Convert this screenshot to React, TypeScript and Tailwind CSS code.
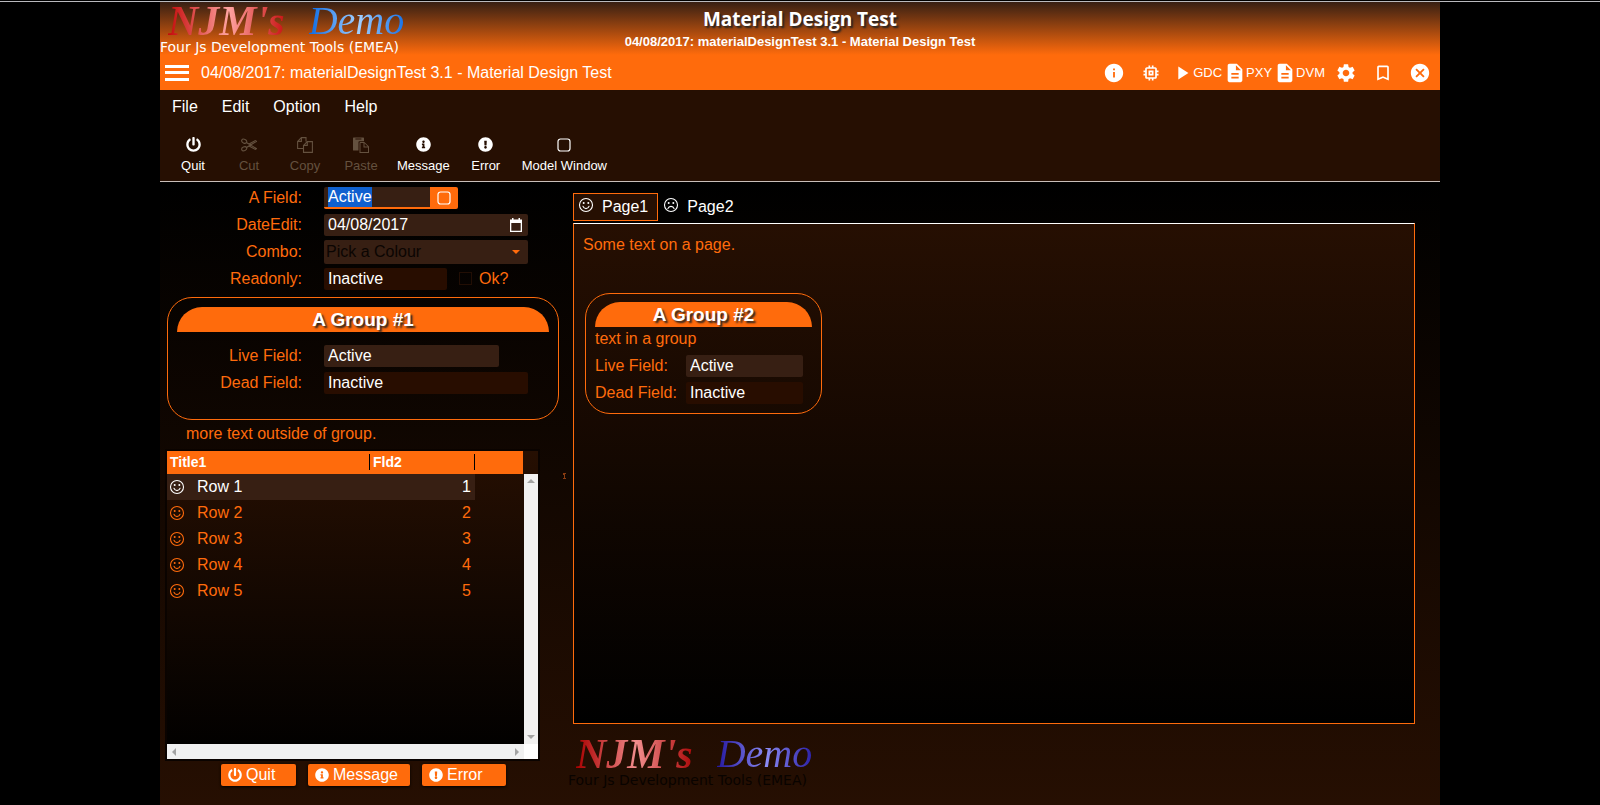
import type { ReactNode } from "react";
import {
  FaPowerOff,
  FaInfoCircle,
  FaExclamationCircle,
} from "react-icons/fa";
import {
  MdInfo,
  MdMemory,
  MdPlayArrow,
  MdDescription,
  MdSettings,
  MdBookmarkBorder,
  MdCancel,
} from "react-icons/md";

function Square({ className }: { className: string }) {
  return (
    <svg viewBox="0 0 16 16" className={className} fill="none" stroke="currentColor" aria-hidden="true">
      <rect x="2" y="2" width="12" height="12" rx="2.5" strokeWidth="1.2" />
    </svg>
  );
}

function Face({ className, sad }: { className: string; sad?: boolean }) {
  return (
    <svg viewBox="0 0 16 16" className={className} fill="none" stroke="currentColor" aria-hidden="true">
      <circle cx="8" cy="8" r="6.5" strokeWidth="1.1" />
      <circle cx="5.7" cy="6" r="1" fill="currentColor" stroke="none" />
      <circle cx="10.3" cy="6" r="1" fill="currentColor" stroke="none" />
      <path d={sad ? "M4.9 11.6c1-3 5.2-3 6.2 0" : "M4.9 9.2c1 3.2 5.2 3.2 6.2 0"} strokeWidth="1.1" strokeLinecap="round" />
    </svg>
  );
}

function Scissors() {
  return (
    <svg viewBox="0 0 16 16" className="size-4" fill="none" stroke="currentColor" strokeWidth="1.1" aria-hidden="true">
      <ellipse cx="3.2" cy="4.2" rx="2.6" ry="1.9" transform="rotate(25 3.2 4.2)" />
      <ellipse cx="3.2" cy="11.8" rx="2.6" ry="1.9" transform="rotate(-25 3.2 11.8)" />
      <path d="M5.4 5.6 8 7.1l6.3-3.5 1.2.7L6 10.2M5.4 10.4 8 8.9l6.3 3.5 1.2-.7L8.6 7.4" />
    </svg>
  );
}

function CopyPages() {
  return (
    <svg viewBox="0 0 16 16" className="size-4" fill="none" stroke="currentColor" strokeWidth="1.1" aria-hidden="true">
      <path d="M6 11.5H.6V4.4L4.4.6H9v4M4.4.6v3.8H.6M6.5 15.4V8.4l3.8-3.8h5.1v10.8zM10.3 4.6v3.8H6.5" />
    </svg>
  );
}

function PastePage() {
  return (
    <svg viewBox="0 0 16 16" className="size-4" aria-hidden="true">
      <path
        fill="currentColor"
        fillRule="evenodd"
        d="M0 1.2Q0 .6.6.6h9.8q.6 0 .6.6v3H6.4q-.9 0-.9.9v8.4H.6q-.6 0-.6-.6zM2.4 1.4v1.2h6V1.4zM7.2 5h4.1L16 9.6V16H6.5V5.6zM7.5 6v9H15v-4.5h-4.5V6zM11.5 6.2v3.3h3.3z"
      />
    </svg>
  );
}

function Logo({ dark }: { dark?: boolean }) {
  return (
    <div className="w-[260px] whitespace-nowrap">
      <div className="flex h-[38px] items-center gap-5 pl-2 font-['Liberation_Serif',serif] leading-[38px] italic">
        <span
          className={
            dark
              ? "bg-linear-to-r/srgb from-[#a80000] via-[#f28d8d] to-[#a80000] bg-clip-text pr-1 text-[42px] font-bold text-transparent"
              : "bg-linear-to-r/srgb from-[#c40a0a] via-[#ffa3a0] to-[#c40a0a] bg-clip-text pr-1 text-[42px] font-bold text-transparent"
          }
        >
          NJM's
        </span>
        <span
          className={
            dark
              ? "bg-linear-to-r/srgb from-[#2418a0] via-[#8b8bf5] to-[#2418a0] bg-clip-text pr-1 text-[40px] text-transparent"
              : "bg-linear-to-r/srgb from-[#0b6be6] via-[#a3d0ff] to-[#0b6be6] bg-clip-text pr-1 text-[40px] text-transparent"
          }
        >
          Demo
        </span>
      </div>
      <div
        className={
          dark
            ? "font-['DejaVu_Sans',sans-serif] text-[14px] leading-[14px] text-[#090300]"
            : "font-['DejaVu_Sans',sans-serif] text-[14px] leading-[14px] text-white"
        }
      >
        Four Js Development Tools (EMEA)
      </div>
    </div>
  );
}

function Tool({ label, disabled, children }: { label: string; disabled?: boolean; children: ReactNode }) {
  return (
    <button
      disabled={disabled}
      className="flex min-w-14 flex-col items-center px-2 text-[13px] leading-4 text-white disabled:text-[#64513f]"
    >
      <span className="flex h-[21px] items-start">{children}</span>
      <span>{label}</span>
    </button>
  );
}

function Row({ id, label, children }: { id: string; label: string; children: ReactNode }) {
  return (
    <div className="flex h-[27px] items-center">
      <label htmlFor={id} className="w-[135px] shrink-0 text-right">
        {label}
      </label>
      <div className="flex flex-1 items-center pl-[22px]">{children}</div>
    </div>
  );
}

function GroupTitle({ children }: { children: ReactNode }) {
  return (
    <h2 className="rounded-t-[25px] bg-[#ff6b0c] text-center text-[19px] leading-[25px] font-bold text-white [text-shadow:2px_2px_2px_#222]">
      {children}
    </h2>
  );
}

const live = "h-[22px] rounded-[2px] bg-[#371f13] px-1 text-white outline-none";
const dead = "h-[22px] rounded-[2px] bg-[#280d00] px-1 text-white outline-none";
const action = "flex h-[22px] items-center gap-1 rounded-[2px] bg-[#ff6b0c] pl-[7px] text-white shadow-[0_1px_3px_#000]";
const rows = [1, 2, 3, 4, 5];

export default function App() {
  return (
    <div className="min-h-screen bg-black pt-px font-['Liberation_Sans',Arial,sans-serif] text-base leading-5 text-[#ff6b0c]">
      <div className="border-t border-[#b9b9bd]">
        <div className="mx-auto flex min-h-[calc(100vh-2px)] w-4/5 flex-col bg-[#260f02]">
          <header className="bg-linear-to-b/srgb from-[#371f13] to-[#ff6b0c] to-[53px] text-white">
            <div className="grid h-[53px] grid-cols-[1fr_auto_1fr]">
              <Logo />
              <div className="pt-[5px] text-center">
                <h1 className="font-['Open_Sans',sans-serif] text-[19px] leading-6 font-bold [text-shadow:2px_2px_2px_#222]">
                  Material Design Test
                </h1>
                <p className="text-[13px] leading-[22px] font-bold">
                  04/08/2017: materialDesignTest 3.1 - Material Design Test
                </p>
              </div>
            </div>
            <div className="flex h-[35px] items-center pr-[9px] pl-[5px]">
              <button aria-label="Menu" className="flex h-4 w-6 flex-col justify-between">
                <span className="h-[3px] w-full bg-white" />
                <span className="h-[3px] w-full bg-white" />
                <span className="h-[3px] w-full bg-white" />
              </button>
              <span className="flex-1 pl-3">04/08/2017: materialDesignTest 3.1 - Material Design Test</span>
              <nav className="flex items-center text-[13px]">
                <button aria-label="About" className="mr-4"><MdInfo size={22} /></button>
                <button aria-label="Processes" className="mr-[10px]"><MdMemory size={20} /></button>
                <button className="flex items-center"><MdPlayArrow size={22} />GDC</button>
                <button className="ml-[2px] flex items-center"><MdDescription size={22} />PXY</button>
                <button className="ml-[2px] flex items-center"><MdDescription size={22} />DVM</button>
                <button aria-label="Settings" className="ml-[10px]"><MdSettings size={22} /></button>
                <button aria-label="Bookmark" className="ml-4"><MdBookmarkBorder size={20} /></button>
                <button aria-label="Close" className="ml-4"><MdCancel size={22} /></button>
              </nav>
            </div>
          </header>

          <nav className="flex h-[45px] gap-6 px-3 pt-[7px] text-white">
            <button className="h-5">File</button>
            <button className="h-5">Edit</button>
            <button className="h-5">Option</button>
            <button className="h-5">Help</button>
          </nav>

          <div className="flex h-[47px] items-start border-b border-[#c9bfba] pt-[2px] pl-[5px]">
            <Tool label="Quit"><FaPowerOff className="size-[15px]" /></Tool>
            <Tool label="Cut" disabled><Scissors /></Tool>
            <Tool label="Copy" disabled><CopyPages /></Tool>
            <Tool label="Paste" disabled><PastePage /></Tool>
            <Tool label="Message"><FaInfoCircle className="size-[15px]" /></Tool>
            <Tool label="Error"><FaExclamationCircle className="size-[15px]" /></Tool>
            <Tool label="Model Window"><Square className="size-4" /></Tool>
          </div>

          <main className="flex flex-1 bg-linear-to-b/srgb from-black to-[#260f02]">
            <section className="flex w-[403px] shrink-0 flex-col pr-1 pl-[7px]">
              <div className="pt-[2px]">
                <Row id="field" label="A Field:">
                  <div className="flex h-[22px] w-[134px] overflow-hidden rounded-[2px]">
                    <div className="flex w-[106px] items-center border-b-2 border-[#ff6b0c] bg-[#371f13] pl-1">
                      <input id="field" defaultValue="Active" className="w-[44px] bg-[#0f60cf] text-white outline-none" />
                    </div>
                    <button aria-label="Zoom" className="flex flex-1 items-center justify-center bg-[#ff6b0c] text-white">
                      <Square className="size-4" />
                    </button>
                  </div>
                </Row>
                <Row id="date" label="DateEdit:">
                  <div className="flex h-[22px] w-[204px] items-center justify-between rounded-[2px] bg-[#371f13] pr-1.5 pl-1 text-white">
                    <input id="date" defaultValue="04/08/2017" className="w-32 outline-none" />
                    <svg viewBox="0 0 12 14" className="h-[14px] w-3" aria-hidden="true">
                      <path fill="currentColor" fillRule="evenodd" d="M2 0h1.5v1.5h5V0H10v1.5h2V14H0V1.5h2zM1.3 5v7.7h9.4V5z" />
                    </svg>
                  </div>
                </Row>
                <Row id="combo" label="Combo:">
                  <div className="grid h-6 w-[204px] items-center rounded-[2px] bg-[#371f13]">
                    <select id="combo" className="col-start-1 row-start-1 h-6 appearance-none pl-[2px] text-[#0b0502] outline-none">
                      <option>Pick a Colour</option>
                    </select>
                    <svg viewBox="0 0 8 4" className="pointer-events-none col-start-1 row-start-1 mr-2 h-1 w-2 justify-self-end" aria-hidden="true">
                      <path fill="currentColor" d="M0 0h8L4 4z" />
                    </svg>
                  </div>
                </Row>
                <Row id="readonly" label="Readonly:">
                  <input id="readonly" readOnly defaultValue="Inactive" className={dead + " w-[123px]"} />
                  <label className="ml-3 flex items-center gap-[7px]">
                    <input type="checkbox" disabled className="size-[13px] appearance-none border border-[#220e04]" />
                    Ok?
                  </label>
                </Row>
              </div>

              <div className="mt-[5px] h-[123px] w-[392px] rounded-[25px] border border-[#ff6b0c] px-[9px] pt-[9px]">
                <GroupTitle>A Group #1</GroupTitle>
                <div className="-ml-[10px] pt-[10px]">
                  <Row id="live1" label="Live Field:">
                    <input id="live1" defaultValue="Active" className={live + " w-[175px]"} />
                  </Row>
                  <Row id="dead1" label="Dead Field:">
                    <input id="dead1" readOnly defaultValue="Inactive" className={dead + " w-[204px]"} />
                  </Row>
                </div>
              </div>

              <p className="pt-1 pl-[19px]">more text outside of group.</p>

              <div className="mt-[7px] flex h-[308px] w-[371px] flex-col bg-linear-to-b/srgb from-[#260f02] to-black shadow-[0_0_0_2px_#0a0300]">
                <div className="flex flex-1">
                  <div className="flex-1">
                    <table className="w-[356px] table-fixed border-collapse">
                      <colgroup>
                        <col className="w-[203px]" />
                        <col className="w-[105px]" />
                        <col />
                      </colgroup>
                      <thead className="bg-[#ff6b0c] text-left text-sm text-white">
                        <tr className="h-[23px]">
                          <th className="pt-[2px] pb-1 pl-[3px]"><div className="h-4 border-r border-black leading-4">Title1</div></th>
                          <th className="pt-[2px] pb-1 pl-[3px]"><div className="h-4 border-r border-black leading-4">Fld2</div></th>
                          <th />
                        </tr>
                      </thead>
                      <tbody>
                        {rows.map((n) => (
                          <tr key={n} className="h-[26px] first:text-white">
                            <td className={n === 1 ? "bg-[#371f13] p-0" : "p-0"}>
                              <div className="flex items-center gap-3 pl-[2px]">
                                <Face className="size-4" />
                                Row {n}
                              </div>
                            </td>
                            <td className={n === 1 ? "bg-[#371f13] p-0 pr-1 text-right" : "p-0 pr-1 text-right"}>{n}</td>
                            <td />
                          </tr>
                        ))}
                      </tbody>
                    </table>
                  </div>
                  <div className="mt-[23px] flex w-[14px] flex-col items-center justify-between bg-[#f1f1f1] py-[5px] text-[#a3a3a3]">
                    <svg viewBox="0 0 8 4" className="h-1 w-2" aria-hidden="true"><path fill="currentColor" d="M4 0l4 4H0z" /></svg>
                    <svg viewBox="0 0 8 4" className="h-1 w-2" aria-hidden="true"><path fill="currentColor" d="M0 0h8L4 4z" /></svg>
                  </div>
                </div>
                <div className="flex h-[15px] bg-white text-[#a3a3a3]">
                  <div className="flex flex-1 items-center justify-between bg-[#f1f1f1] px-[5px]">
                    <svg viewBox="0 0 4 8" className="h-2 w-1" aria-hidden="true"><path fill="currentColor" d="M4 0v8L0 4z" /></svg>
                    <svg viewBox="0 0 4 8" className="h-2 w-1" aria-hidden="true"><path fill="currentColor" d="M0 0l4 4-4 4z" /></svg>
                  </div>
                  <div className="w-[14px]" />
                </div>
              </div>

              <div className="flex gap-3 pt-[5px] pl-[54px]">
                <button className={action + " w-[75px]"}><FaPowerOff size={14} />Quit</button>
                <button className={action + " w-[102px]"}><FaInfoCircle size={14} />Message</button>
                <button className={action + " w-[84px]"}><FaExclamationCircle size={14} />Error</button>
              </div>
            </section>

            <div role="separator" className="w-1 pt-[291px]">
              <svg viewBox="0 0 4 6" className="h-1.5 w-1 text-[#8a3c10]" aria-hidden="true">
                <path fill="currentColor" d="M0 0h3v1H2v4h1v1H0V5h1V2H0z" />
              </svg>
            </div>

            <section className="flex flex-1 flex-col pt-[11px] pr-[25px] pl-[6px]">
              <div role="tablist" className="flex h-[30px] items-start text-white">
                <button role="tab" aria-selected="true" className="flex h-7 items-center gap-2 border border-[#ff6b0c] bg-[#260f02] pr-[9px] pl-1">
                  <Face className="mb-1 size-4" />
                  Page1
                </button>
                <button role="tab" aria-selected="false" className="flex h-7 items-center gap-2 pr-[9px] pl-[5px]">
                  <Face sad className="mb-1 size-4" />
                  Page2
                </button>
              </div>
              <div className="h-[501px] border border-t-white border-r-[#ff6b0c] border-b-[#ff6b0c] border-l-[#ff6b0c] bg-linear-to-b/srgb from-[#260f02] to-black px-[9px] pt-[11px]">
                <p>Some text on a page.</p>
                <div className="mt-[38px] ml-[2px] h-[121px] w-[237px] rounded-[25px] border border-[#ff6b0c] px-[9px] pt-2">
                  <GroupTitle>A Group #2</GroupTitle>
                  <p className="pt-[2px]">text in a group</p>
                  <div className="grid grid-cols-[91px_1fr] items-center gap-y-[5px] pt-[6px]">
                    <label htmlFor="live2">Live Field:</label>
                    <input id="live2" defaultValue="Active" className={live + " w-[117px]"} />
                    <label htmlFor="dead2">Dead Field:</label>
                    <input id="dead2" readOnly defaultValue="Inactive" className={dead + " w-[117px]"} />
                  </div>
                </div>
              </div>
              <div className="-ml-[5px] pt-[11px]">
                <Logo dark />
              </div>
            </section>
          </main>
        </div>
      </div>
    </div>
  );
}
